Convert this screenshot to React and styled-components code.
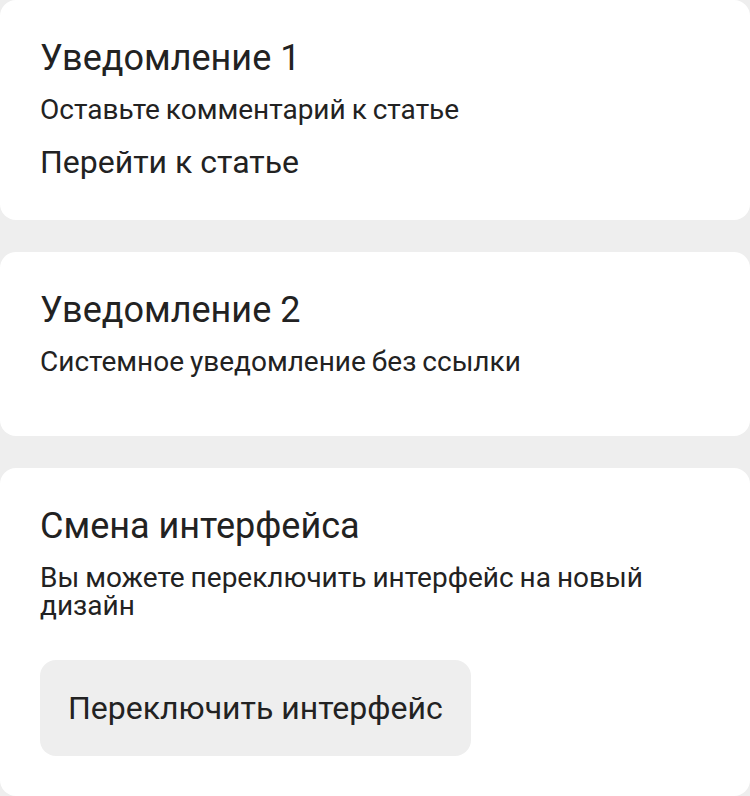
import React from 'react'
import styled, { createGlobalStyle } from 'styled-components'

const GlobalStyle = createGlobalStyle`
    html, body {
        margin: 0;
        padding: 0;
        background: #eeeeee;
    }
    body {
        font-family: Roboto, "Liberation Sans", sans-serif;
        color: #222;
    }
`;

const List = styled.div`
    display: flex;
    flex-direction: column;
    gap: 32px;
`;

const Card = styled.div`
    background: #fff;
    border-radius: 16px;
    padding: 40px;
    display: flex;
    flex-direction: column;
    align-items: flex-start;
`;

const Title = styled.h2`
    margin: 0 0 20px;
    font-size: 36px;
    line-height: 36px;
    font-weight: 400;
    color: #222;
`;

const Text = styled.p`
    margin: 0 0 20px;
    font-size: 28px;
    line-height: 28px;
    word-spacing: -1px;
    color: #222;
`;

const Link = styled.a`
    font-size: 32px;
    line-height: 36px;
    color: #222;
    text-decoration: none;
`;

const Button = styled.button`
    margin-top: 20px;
    height: 96px;
    padding: 0 28px;
    border: none;
    border-radius: 16px;
    background: #eeeeee;
    font-family: inherit;
    font-size: 32px;
    color: #222;
`;

const notifications = [
    { id: 1, title: 'Уведомление 1', text: 'Оставьте комментарий к статье', link: 'Перейти к статье' },
    { id: 2, title: 'Уведомление 2', text: 'Системное уведомление без ссылки' },
];

export default function App() {
    return (
        <>
        <GlobalStyle />
        <List>
            {notifications.map(n => (
                <Card key={n.id}>
                    <Title>{n.title}</Title>
                    <Text>{n.text}</Text>
                    {n.link && <Link href="#">{n.link}</Link>}
                </Card>
            ))}
            <Card>
                <Title>Смена интерфейса</Title>
                <Text>Вы можете переключить интерфейс на новый дизайн</Text>
                <Button>Переключить интерфейс</Button>
            </Card>
        </List>
        </>
    );
}
